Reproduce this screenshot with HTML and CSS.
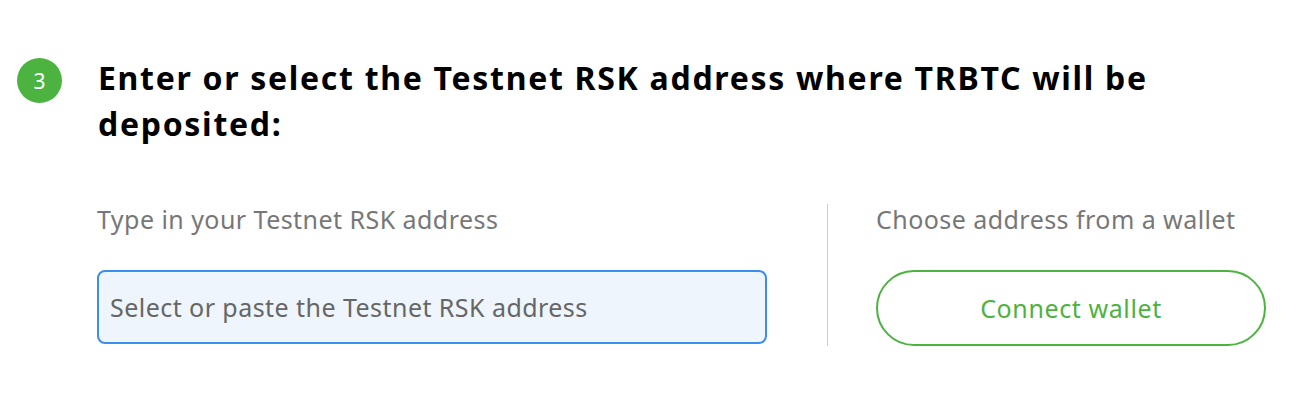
FILE: index.html
```html
<!DOCTYPE html>
<html>
<head>
<meta charset="utf-8">
<link rel="stylesheet" href="styles.css">
</head>
<body>
<section class="step">
  <div class="step-head">
    <div class="badge">3</div>
    <h2 class="title">Enter or select the Testnet RSK address where TRBTC will be deposited:</h2>
  </div>
  <div class="step-body">
    <div class="col col-left">
      <div class="label">Type in your Testnet RSK address</div>
      <input class="address" type="text" placeholder="Select or paste the Testnet RSK address">
    </div>
    <div class="divider"></div>
    <div class="col col-right">
      <div class="label">Choose address from a wallet</div>
      <button class="connect" type="button">Connect wallet</button>
    </div>
  </div>
</section>
</body>
</html>
```
FILE: styles.css
```css
html, body {
  margin: 0;
  padding: 0;
  background: #ffffff;
}
body {
  font-family: "Noto Sans", "Open Sans", sans-serif;
}
.step {
  padding: 55px 0 0 17px;
}
.step-head {
  display: flex;
  align-items: flex-start;
}
.badge {
  width: 45px;
  height: 45px;
  margin-top: 3px;
  border-radius: 50%;
  background: #4db340;
  color: #ffffff;
  font-size: 21px;
  font-weight: 400;
  display: flex;
  align-items: center;
  justify-content: center;
  flex: none;
}
.title {
  margin: 0 0 0 36px;
  width: 1110px;
  font-size: 32px;
  line-height: 46px;
  font-weight: 700;
  letter-spacing: 1.7px;
  color: #000000;
}
.step-body {
  display: flex;
  margin: 57px 0 0 80px;
}
.col {
  display: flex;
  flex-direction: column;
}
.col-left {
  width: 670px;
}
.col-right {
  width: 390px;
}
.label {
  font-size: 25px;
  line-height: 30px;
  letter-spacing: 0.45px;
  color: #777777;
  font-weight: 400;
}
.address {
  margin-top: 36px;
  box-sizing: border-box;
  height: 74px;
  width: 100%;
  border: 2px solid #3a8eef;
  border-radius: 8px;
  background: #eef5fc;
  padding: 0 11px;
  font-family: inherit;
  font-size: 25px;
  letter-spacing: 0.45px;
  color: #333;
  outline: none;
}
.address::placeholder {
  color: #666666;
}
.divider {
  width: 1px;
  background: #cccccc;
  margin: 0 48px 0 60px;
  height: 142px;
}
.connect {
  margin-top: 36px;
  box-sizing: border-box;
  height: 76px;
  width: 100%;
  border: 2px solid #4db340;
  border-radius: 38px;
  background: #ffffff;
  color: #4db340;
  font-family: inherit;
  font-size: 25px;
  letter-spacing: 0.6px;
  font-weight: 400;
  cursor: pointer;
}
```
